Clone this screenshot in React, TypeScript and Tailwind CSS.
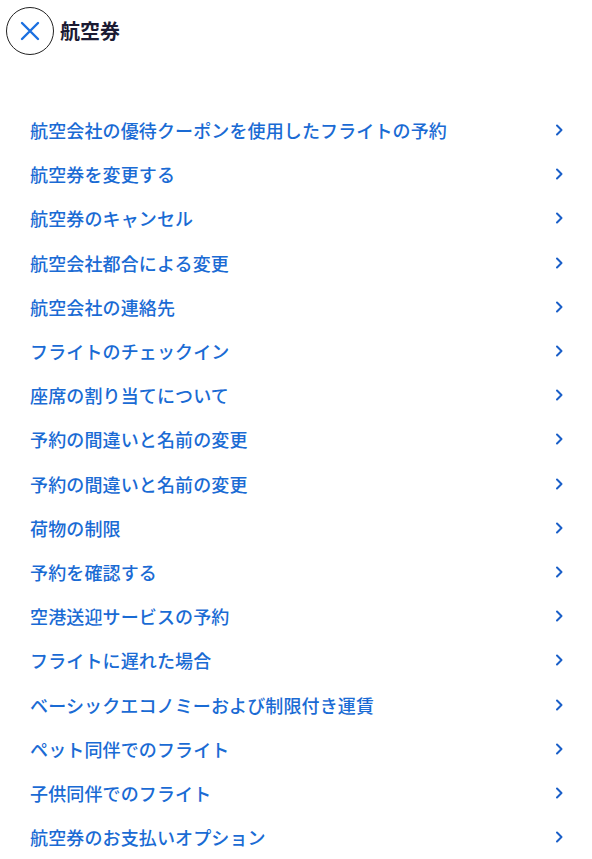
import React from "react";

const items = [
  "航空会社の優待クーポンを使用したフライトの予約",
  "航空券を変更する",
  "航空券のキャンセル",
  "航空会社都合による変更",
  "航空会社の連絡先",
  "フライトのチェックイン",
  "座席の割り当てについて",
  "予約の間違いと名前の変更",
  "予約の間違いと名前の変更",
  "荷物の制限",
  "予約を確認する",
  "空港送迎サービスの予約",
  "フライトに遅れた場合",
  "ベーシックエコノミーおよび制限付き運賃",
  "ペット同伴でのフライト",
  "子供同伴でのフライト",
  "航空券のお支払いオプション",
];

function Chevron() {
  return (
    <svg width="10" height="14" viewBox="0 0 10 14" fill="none">
      <path d="M3 2.5 L7.5 7 L3 11.5" stroke="#1a5fc8" strokeWidth="2" strokeLinecap="round" strokeLinejoin="round" />
    </svg>
  );
}

export default function App() {
  return (
    <div
      className="w-[592px] h-[859px] overflow-hidden bg-white"
      style={{ fontFamily: '"Noto Sans CJK JP", "Noto Sans", sans-serif' }}
    >
      <div className="flex items-center gap-[6px] pl-[6px] pt-[7px]">
        <button className="w-[48px] h-[48px] rounded-full border border-[#222] flex items-center justify-center">
          <svg width="22" height="22" viewBox="0 0 22 22" fill="none">
            <path d="M3 3 L19 19 M19 3 L3 19" stroke="#1a6fe0" strokeWidth="2.4" strokeLinecap="round" />
          </svg>
        </button>
        <h1 className="text-[20px] font-bold text-[#1b1b33]">航空券</h1>
      </div>
      <ul className="mt-[53px] pl-[30px] pr-[28px]">
        {items.map((t, i) => (
          <li key={i} className="h-[44.2px] flex items-center justify-between">
            <span className="text-[18px] font-medium tracking-[0.13px] text-[#1a6bd4] leading-none">{t}</span>
            <Chevron />
          </li>
        ))}
      </ul>
    </div>
  );
}
